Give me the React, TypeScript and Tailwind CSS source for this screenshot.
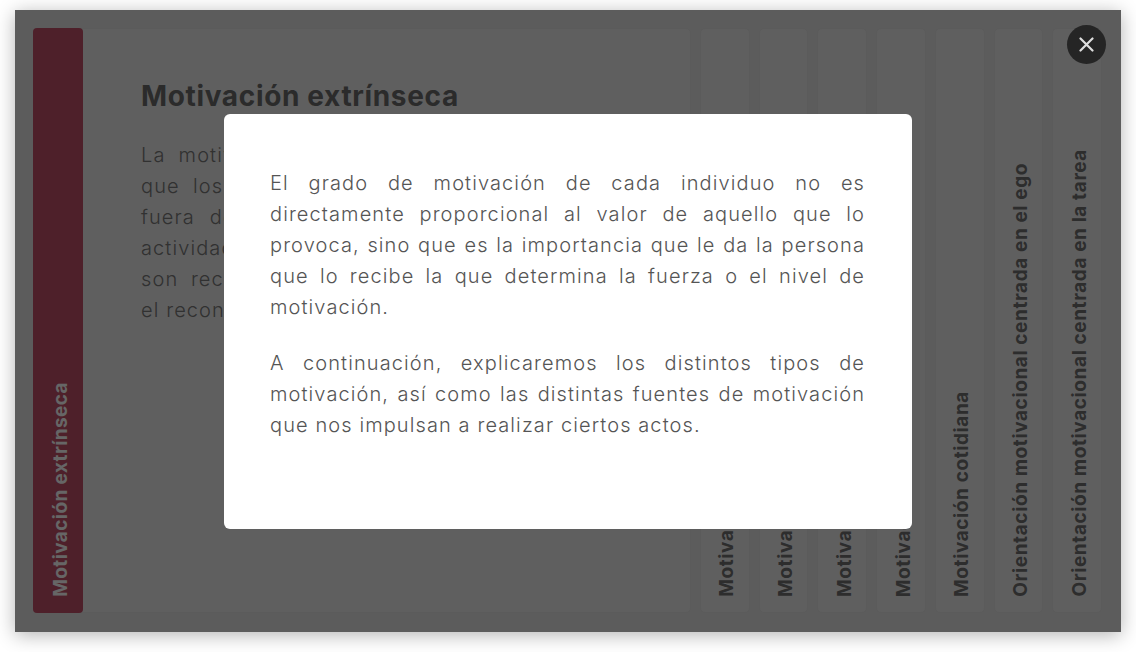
const sideTabs = [
  "Motivación intrínseca",
  "Motivación de logro",
  "Motivación social",
  "Motivación laboral",
  "Motivación cotidiana",
  "Orientación motivacional centrada en el ego",
  "Orientación motivacional centrada en la tarea",
];

const introLines = [
  "La motivación extrínseca es la que despierta",
  "que los individuos experimentan por factores",
  "fuera de la propia actividad. Quienes hacen",
  "actividades por este motivo buscan premios",
  "son reconocidos por otros, como el dinero o",
];

const font = "font-['Inter','Liberation_Sans',sans-serif]";

export default function App() {
  return (
    <div className={`${font} h-[652px] w-[1136px] overflow-hidden bg-white pt-[10px] pr-[15px] pb-[20px] pl-[15px]`}>
      <div className="relative h-[622px] w-[1106px] bg-[#e6e6e6] pt-[18px] pr-[19px] pb-[19px] pl-[18px] shadow-[0_3px_18px_rgba(0,0,0,0.3)]">
        <div className="flex h-full gap-[9px]">
          {/* Open panel */}
          <div className="flex w-[658px] shrink-0 rounded-[5px] border border-[#e3e3e3] bg-[#eeeeee]">
            <div className="-my-px -ml-px flex w-[50px] shrink-0 flex-col items-center justify-end rounded-[4px] bg-[#c35069] pb-[16px] pl-[4px]">
              <span className="rotate-180 text-[19px] leading-none font-bold tracking-[0.4px] whitespace-nowrap text-white [writing-mode:vertical-rl]">
                Motivación extrínseca
              </span>
            </div>
            <div className="w-[558px] pt-[48px] pl-[58px]">
              <h2 className="text-[28px] leading-[38px] font-bold tracking-[0.65px] text-[#6b6b6b]">
                Motivación extrínseca
              </h2>
              <div className="mt-[25px] w-[500px] text-[20px] leading-[31px] font-light tracking-[1.1px] text-[#7a7a7a]">
                {introLines.map((line) => (
                  <p key={line} className="text-justify [text-align-last:justify]">
                    {line}
                  </p>
                ))}
                <p>el reconocimiento social.</p>
              </div>
            </div>
          </div>

          {/* Closed tabs */}
          {sideTabs.map((label) => (
            <div
              key={label}
              className="flex min-w-0 flex-1 flex-col items-center justify-end rounded-[5px] border border-[#e3e3e3] bg-[#eeeeee] pb-[15px] pl-[4px]"
            >
              <span className="rotate-180 text-[19px] leading-none font-bold tracking-[0.6px] whitespace-nowrap text-[#707070] [writing-mode:vertical-rl]">
                {label}
              </span>
            </div>
          ))}
        </div>

        {/* Overlay */}
        <div className="absolute inset-0 bg-black/60" />

        {/* Modal */}
        <div className="absolute top-[104px] left-[209px] h-[415px] w-[688px] rounded-[6px] bg-white pt-[54px] pr-[47px] pl-[46px] text-justify text-[20px] leading-[31px] font-light tracking-[1.1px] text-[#555]">
          <p>
            El grado de motivación de cada individuo no es directamente proporcional al valor de aquello que lo
            provoca, sino que es la importancia que le da la persona que lo recibe la que determina la fuerza o el
            nivel de motivación.
          </p>
          <p className="mt-[25px]">
            A continuación, explicaremos los distintos tipos de motivación, así como las distintas fuentes de
            motivación que nos impulsan a realizar ciertos actos.
          </p>
        </div>

        {/* Close button */}
        <button className="absolute top-[15px] right-[15px] flex h-[39px] w-[39px] items-center justify-center rounded-full bg-[#252525]">
          <svg width="15" height="15" viewBox="0 0 15 15" fill="none" stroke="#dedede" strokeWidth="2.2" strokeLinecap="round">
            <path d="M1.5 1.5 13.5 13.5M13.5 1.5 1.5 13.5" />
          </svg>
        </button>
      </div>
    </div>
  );
}
